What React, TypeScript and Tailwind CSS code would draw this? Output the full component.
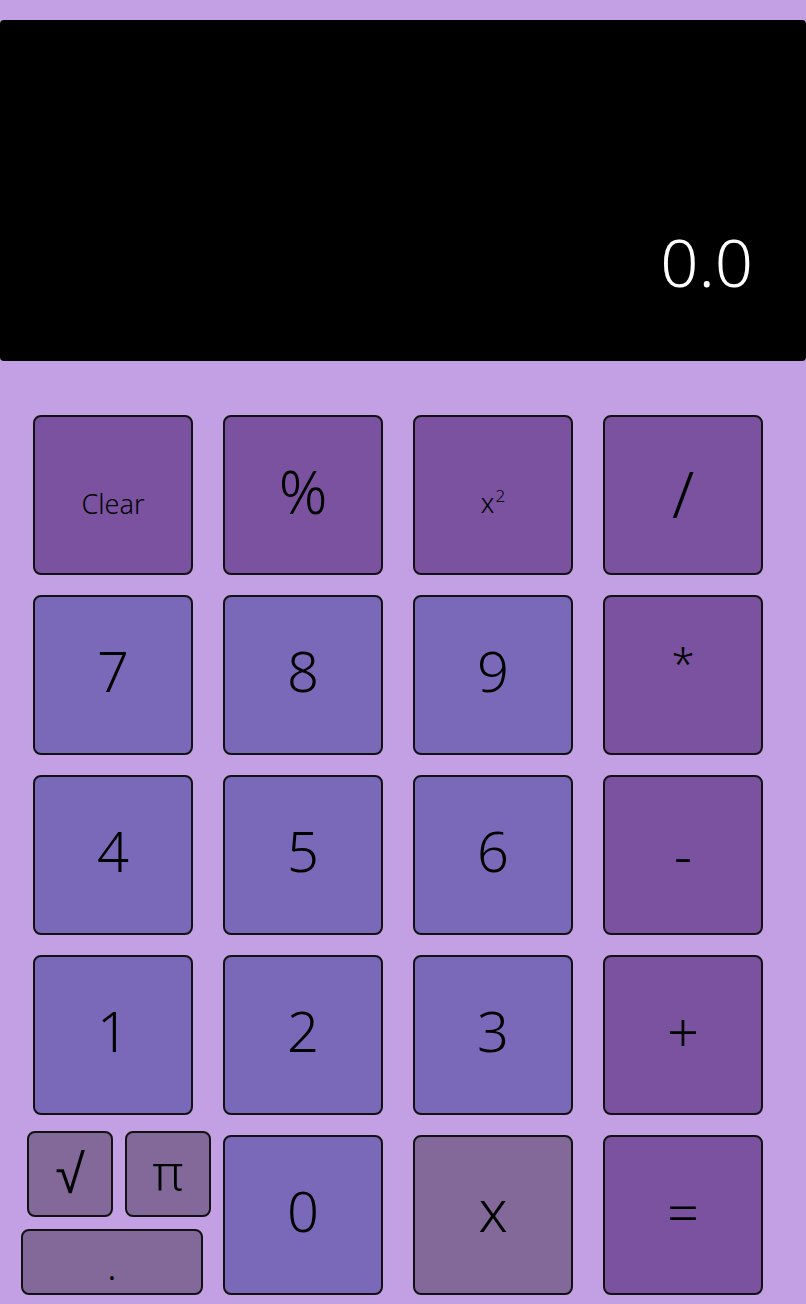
import React from 'react';

type Key = { label: React.ReactNode; kind: 'op' | 'num' | 'fn'; size?: string };

const keys: Key[] = [
  { label: 'Clear', kind: 'op', size: 'text-[27px] pt-[16px]' },
  { label: '%', kind: 'op', size: 'text-[60px] pb-[8px]' },
  {
    label: (
      <span className="relative">
        x<span className="relative -top-[11px] ml-[1px] text-[17px]">2</span>
      </span>
    ),
    kind: 'op',
    size: 'text-[27px] pt-[14px]',
  },
  { label: '/', kind: 'op', size: 'text-[64px] pb-[2px]' },
  { label: '7', kind: 'num' },
  { label: '8', kind: 'num' },
  { label: '9', kind: 'num' },
  { label: '*', kind: 'op', size: 'text-[42px] pb-[24px]' },
  { label: '4', kind: 'num' },
  { label: '5', kind: 'num' },
  { label: '6', kind: 'num' },
  { label: '-', kind: 'op', size: 'text-[56px] pb-[2px]' },
  { label: '1', kind: 'num' },
  { label: '2', kind: 'num' },
  { label: '3', kind: 'num' },
  { label: '+', kind: 'op' },
];

const colors = {
  op: 'bg-[#7a52a0]',
  num: 'bg-[#7a68b8]',
  fn: 'bg-[#82699a]',
};

const Button = ({ item, className = '' }: { item: Key; className?: string }) => (
  <button
    className={`flex items-center justify-center rounded-[8px] border-2 border-[#111] font-light text-black leading-none ${colors[item.kind]} ${item.size ?? 'text-[56px] pb-[10px]'} ${className}`}
  >
    {item.label}
  </button>
);

export default function App() {
  return (
    <div className="min-h-[1304px] w-[806px] bg-[#c39fe3] pt-[20px] font-['Noto_Sans',sans-serif]">
      {/* Display */}
      <div className="flex h-[341px] items-end justify-end rounded-[4px] bg-black pb-[66px] pr-[53px]">
        <span className="text-[67px] font-light leading-none text-white">0.0</span>
      </div>

      {/* Keypad */}
      <div className="mt-[54px] grid grid-cols-[repeat(4,160px)] auto-rows-[160px] gap-x-[30px] gap-y-[20px] px-[33px]">
        {keys.map((k, i) => (
          <Button key={i} item={k} />
        ))}

        {/* bottom-left cluster */}
        <div className="-ml-[12px] -mt-[4px] flex w-[190px] flex-col gap-[12px]">
          <div className="flex gap-[12px] pl-[6px]">
            <Button item={{ label: '√', kind: 'fn', size: 'text-[54px] pb-[4px]' }} className="h-[86px] w-[86px]" />
            <Button item={{ label: 'π', kind: 'fn', size: 'text-[50px] pb-[4px]' }} className="h-[86px] w-[86px]" />
          </div>
          <Button item={{ label: '.', kind: 'fn', size: 'text-[40px] items-end pb-[8px]' }} className="h-[66px] w-[182px]" />
        </div>
        <Button item={{ label: '0', kind: 'num' }} />
        <Button item={{ label: 'x', kind: 'fn', size: 'text-[58px] pb-[10px]' }} />
        <Button item={{ label: '=', kind: 'op', size: 'text-[56px] pb-[8px]' }} />
      </div>
    </div>
  );
}
